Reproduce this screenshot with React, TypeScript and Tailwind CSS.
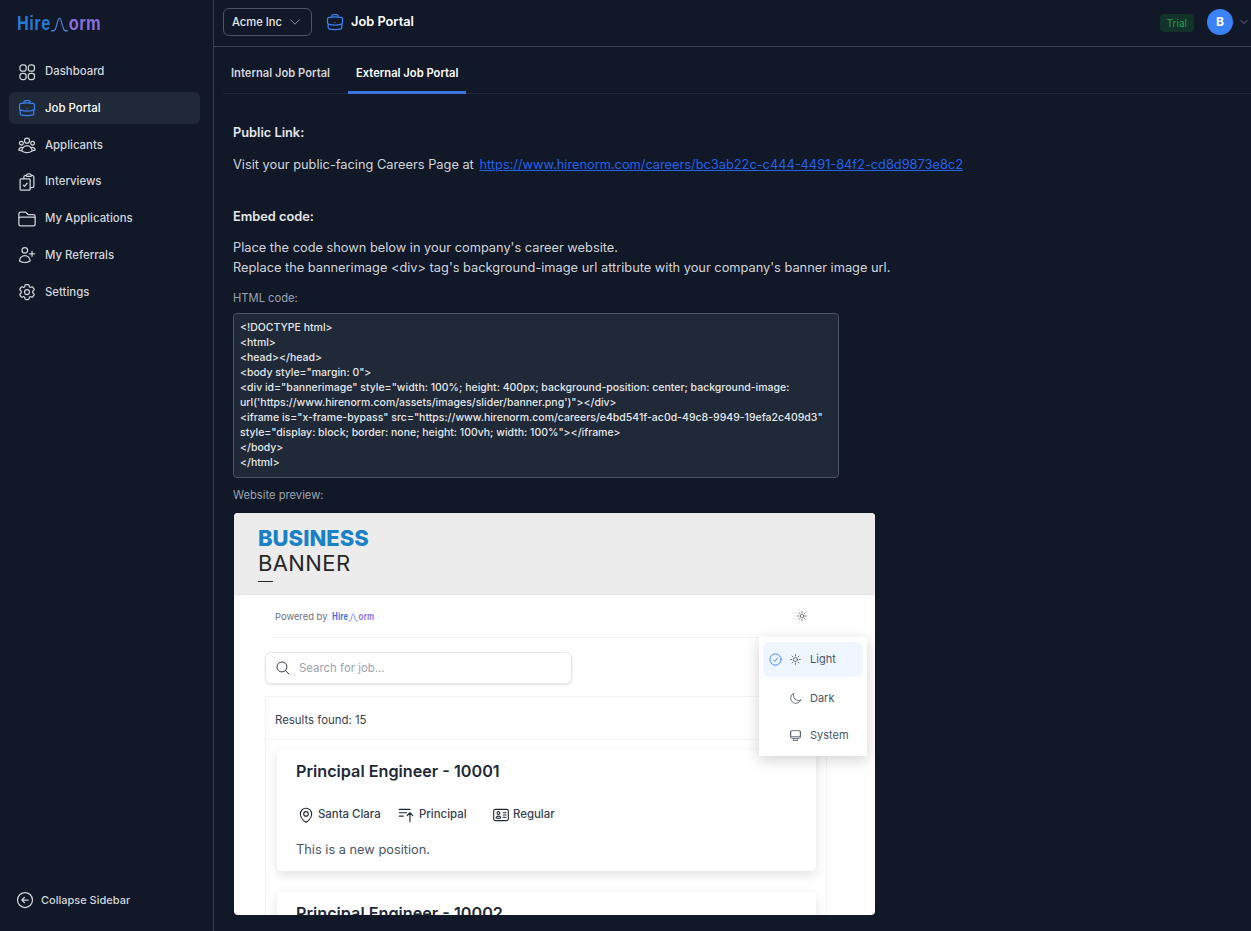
import type { ComponentType, ReactNode } from "react";
import {
  HiOutlineArrowLeftCircle,
  HiOutlineBarsArrowUp,
  HiOutlineBriefcase,
  HiOutlineCheckCircle,
  HiOutlineChevronDown,
  HiOutlineClipboardDocumentCheck,
  HiOutlineCog6Tooth,
  HiOutlineComputerDesktop,
  HiOutlineFolder,
  HiOutlineIdentification,
  HiOutlineMagnifyingGlass,
  HiOutlineMapPin,
  HiOutlineMoon,
  HiOutlineSun,
  HiOutlineUserGroup,
  HiOutlineUserPlus,
} from "react-icons/hi2";

type IconType = ComponentType<{ className?: string }>;

function DashboardIcon({ className }: { className?: string }) {
  return (
    <svg viewBox="0 0 24 24" fill="none" stroke="currentColor" strokeWidth={1.5} className={className}>
      <rect x="3.5" y="3.5" width="7.5" height="7.5" rx="3" />
      <rect x="13.5" y="3.5" width="7.5" height="7.5" rx="3" />
      <rect x="3.5" y="13.5" width="7.5" height="7.5" rx="3" />
      <rect x="13.5" y="13.5" width="7.5" height="7.5" rx="3" />
    </svg>
  );
}

function Logo({ small }: { small?: boolean }) {
  return (
    <span className={small ? "flex origin-left scale-x-[0.8] items-end font-['Liberation_Sans',sans-serif] text-[10px] font-bold leading-none" : "flex origin-left scale-x-[0.78] items-end font-['Liberation_Sans',sans-serif] text-[21px] font-bold leading-none"}>
      <span className={small ? "tracking-[0.2px] text-[#3b72e0]" : "tracking-[0.6px] text-[#2a78d2]"}>Hire</span>
      <svg viewBox="0 0 28 18" fill="none" strokeWidth={1.8} className={small ? "h-[9px] w-[13px] stroke-[#5f78dc]" : "h-[17px] w-[23px] stroke-[#4f7bd4]"}>
        <path d="M1 16.5h4c5 0 5-15 9-15s4 15 9 15h4" />
      </svg>
      <span className={small ? "tracking-[0.2px] text-[#8c74dc]" : "tracking-[0.6px] text-[#8a6fdc]"}>orm</span>
    </span>
  );
}

const navItems: { label: string; icon: IconType; active?: boolean }[] = [
  { label: "Dashboard", icon: DashboardIcon },
  { label: "Job Portal", icon: HiOutlineBriefcase, active: true },
  { label: "Applicants", icon: HiOutlineUserGroup },
  { label: "Interviews", icon: HiOutlineClipboardDocumentCheck },
  { label: "My Applications", icon: HiOutlineFolder },
  { label: "My Referrals", icon: HiOutlineUserPlus },
  { label: "Settings", icon: HiOutlineCog6Tooth },
];

function Sidebar() {
  return (
    <aside className="flex w-[214px] shrink-0 flex-col border-r border-[#374151] bg-[#111827]">
      <div className="h-[55px] pl-[17px] pt-[12px]">
        <Logo />
      </div>
      <nav className="flex flex-col gap-[4.8px] pl-[9px] pr-[13px]">
        {navItems.map((item) => {
          const Icon = item.icon;
          return (
            <a
              key={item.label}
              href="#"
              className={`flex h-8 items-center gap-2 rounded-md pl-2 pt-px text-[11.4px] font-medium ${item.active ? "bg-[#1f2937] text-white" : "text-[#d1d5db]"}`}
            >
              <Icon className={`h-5 w-5 shrink-0 ${item.active ? "text-[#3b82f6]" : "text-[#d1d5db]"}`} />
              {item.label}
            </a>
          );
        })}
      </nav>
      <a href="#" className="mb-[21px] mt-auto flex items-center gap-[6px] pl-[15px] text-[11px] font-medium text-[#d1d5db]">
        <HiOutlineArrowLeftCircle className="h-5 w-5" />
        Collapse Sidebar
      </a>
    </aside>
  );
}

function TopBar() {
  return (
    <header className="flex h-[47px] shrink-0 items-center border-b border-[#374151] pb-[2px] pl-[9px] pr-[2px]">
      <button type="button" className="flex h-[28px] w-[89px] items-center justify-between rounded-md border border-[#4b5563] pl-[8px] pr-[9px] text-[11.2px] font-medium text-[#e5e7eb]">
        Acme Inc
        <HiOutlineChevronDown className="h-3.5 w-3.5 text-[#9ca3af]" />
      </button>
      <HiOutlineBriefcase className="ml-[13px] h-5 w-5 text-[#3b82f6]" />
      <span className="ml-[6px] text-[12.8px] font-semibold text-white">Job Portal</span>
      <span className="ml-auto mt-[1px] rounded bg-[#12322a] px-[7px] py-[3px] text-[10px] leading-3 text-[#22a04f]">Trial</span>
      <span className="ml-[13px] grid h-[26px] w-[26px] place-items-center rounded-full bg-[#3b82f6] text-xs font-bold text-white">B</span>
      <HiOutlineChevronDown className="ml-[6px] h-[10px] w-[10px] text-[#9ca3af]" />
    </header>
  );
}

function Tabs() {
  return (
    <div className="ml-[9px] flex h-[47px] shrink-0 gap-2.5 border-b border-[#1f2937] text-[11.2px] font-semibold">
      <a href="#" className="flex items-center px-2 pt-[7px] text-[#d1d5db]">Internal Job Portal</a>
      <a href="#" className="-mb-px flex items-center border-b-[3px] border-[#3b76e0] px-2 pt-[9px] text-white">External Job Portal</a>
    </div>
  );
}

const codeLines = [
  "<!DOCTYPE html>",
  "<html>",
  "<head></head>",
  '<body style="margin: 0">',
  '<div id="bannerimage" style="width: 100%; height: 400px; background-position: center; background-image:',
  "url('https://www.hirenorm.com/assets/images/slider/banner.png')\"></div>",
  '<iframe is="x-frame-bypass" src="https://www.hirenorm.com/careers/e4bd541f-ac0d-49c8-9949-19efa2c409d3"',
  'style="display: block; border: none; height: 100vh; width: 100%"></iframe>',
  "</body>",
  "</html>",
];

function Meta({ icon: Icon, children, className }: { icon: IconType; children: ReactNode; className?: string }) {
  return (
    <span className={`flex items-center gap-[3px] text-[11.4px] font-medium text-[#374151] ${className ?? ""}`}>
      <Icon className="h-[18px] w-[18px] shrink-0 text-[#1f2937]" />
      {children}
    </span>
  );
}

function ThemeMenu() {
  return (
    <div className="absolute left-[525px] top-[124px] w-[108px] bg-white px-[4px] py-[5px] text-[11px] text-[#4b5563] shadow-[0_4px_14px_rgba(0,0,0,0.18)]">
      <div className="flex h-[35px] items-center rounded-md bg-[#eff6ff] pl-[5px]">
        <HiOutlineCheckCircle className="h-[15px] w-[15px] text-[#3b82f6]" />
        <HiOutlineSun className="ml-[6px] h-[13px] w-[13px]" />
        <span className="ml-[8px]">Light</span>
      </div>
      <div className="flex h-[42px] items-center pl-[26px]">
        <HiOutlineMoon className="h-[13px] w-[13px]" />
        <span className="ml-[8px]">Dark</span>
      </div>
      <div className="flex h-[32px] items-center pl-[26px]">
        <HiOutlineComputerDesktop className="h-[13px] w-[13px]" />
        <span className="ml-[8px]">System</span>
      </div>
    </div>
  );
}

function JobCard({ title }: { title: string }) {
  return (
    <div className="mb-[21px] ml-[11px] h-[121px] w-[539px] rounded bg-white pl-[19px] pt-[9px] shadow-[0_4px_12px_rgba(0,0,0,0.12)]">
      <h3 className="text-[16.2px] font-semibold leading-6 text-[#1f2937]">{title}</h3>
      <div className="mt-[23px] flex items-center">
        <Meta icon={HiOutlineMapPin} className="w-[101px] pl-px">Santa Clara</Meta>
        <Meta icon={HiOutlineBarsArrowUp} className="w-[95px] gap-[4px]">Principal</Meta>
        <Meta icon={HiOutlineIdentification}>Regular</Meta>
      </div>
      <p className="mt-[18px] text-[12.8px] leading-4 text-[#4b5563]">This is a new position.</p>
    </div>
  );
}

function Preview() {
  return (
    <div className="relative ml-px mt-[10px] h-[402px] w-[641px] overflow-hidden rounded-sm bg-white font-['Inter',sans-serif]">
      <div className="h-[82px] border-b border-[#e5e7eb] bg-[#ececec] pl-[24px] pt-[13px]">
        <div className="text-[22px] font-extrabold leading-[25px] text-[#1a82c4]">BUSINESS</div>
        <div className="text-[22px] leading-[24px] tracking-[0.4px] text-[#27272a]">BANNER</div>
        <div className="mt-[6px] h-px w-[15px] bg-[#27272a]" />
      </div>
      <div className="ml-[38px] mr-[40px] flex h-[43px] items-center gap-[5px] border-b border-[#f3f4f6] pl-[3px] pt-[2px] text-[9.4px] text-[#6b7280]">
        Powered by
        <Logo small />
        <HiOutlineSun className="mb-[3px] ml-auto mr-[27px] h-3 w-3 text-[#4b5563]" />
      </div>
      <div className="ml-[31px] mt-[14px] flex h-[32px] w-[307px] items-center rounded-md border border-[#e5e7eb] pl-[9px] shadow-sm">
        <HiOutlineMagnifyingGlass className="h-4 w-4 text-[#374151]" />
        <span className="ml-[8px] pt-[2px] text-[11.4px] text-[#9ca3af]">Search for job...</span>
      </div>
      <div className="ml-[31px] mt-[12px] w-[562px] border-x border-t border-[#f3f4f6]">
        <div className="flex h-[43px] items-center border-b border-[#f3f4f6] pl-[9px] pt-[6px] text-[11.4px] text-[#374151]">Results found: 15</div>
        <div className="pt-[10px]">
          <JobCard title="Principal Engineer - 10001" />
          <JobCard title="Principal Engineer - 10002" />
        </div>
      </div>
      <ThemeMenu />
    </div>
  );
}

export default function App() {
  return (
    <div className="flex h-[931px] w-full overflow-hidden bg-[#111827] font-['Inter',sans-serif]">
      <Sidebar />
      <main className="flex min-w-0 flex-1 flex-col">
        <TopBar />
        <Tabs />
        <div className="pl-[19px] pt-[29px]">
          <h2 className="text-[12.8px] font-semibold leading-5 text-[#e5e7eb]">Public Link:</h2>
          <p className="mt-3 text-[12.8px] leading-5 text-[#d1d5db]">
            Visit your public-facing Careers Page at{" "}
            <a href="#" className="ml-[2px] text-[#2563eb] underline">https://www.hirenorm.com/careers/bc3ab22c-c444-4491-84f2-cd8d9873e8c2</a>
          </p>
          <h2 className="mt-[32px] text-[12.8px] font-semibold leading-5 text-[#e5e7eb]">Embed code:</h2>
          <p className="mt-[11px] text-[12.8px] leading-5 text-[#d1d5db]">
            Place the code shown below in your company's career website.
            <br />
            Replace the bannerimage &lt;div&gt; tag's background-image url attribute with your company's banner image url.
          </p>
          <div className="mt-[12px] text-[11.2px] leading-4 text-[#9ca3af]">HTML code:</div>
          <pre className="mt-[7px] h-[165px] w-[606px] rounded border border-[#4b5563] bg-[#1f2937] p-[6px] font-['Inter',sans-serif] text-[10.5px] font-medium leading-[15px] text-[#e5e7eb]">
            {codeLines.join("\n")}
          </pre>
          <div className="mt-[9px] text-[11.2px] leading-4 text-[#9ca3af]">Website preview:</div>
          <Preview />
        </div>
      </main>
    </div>
  );
}
